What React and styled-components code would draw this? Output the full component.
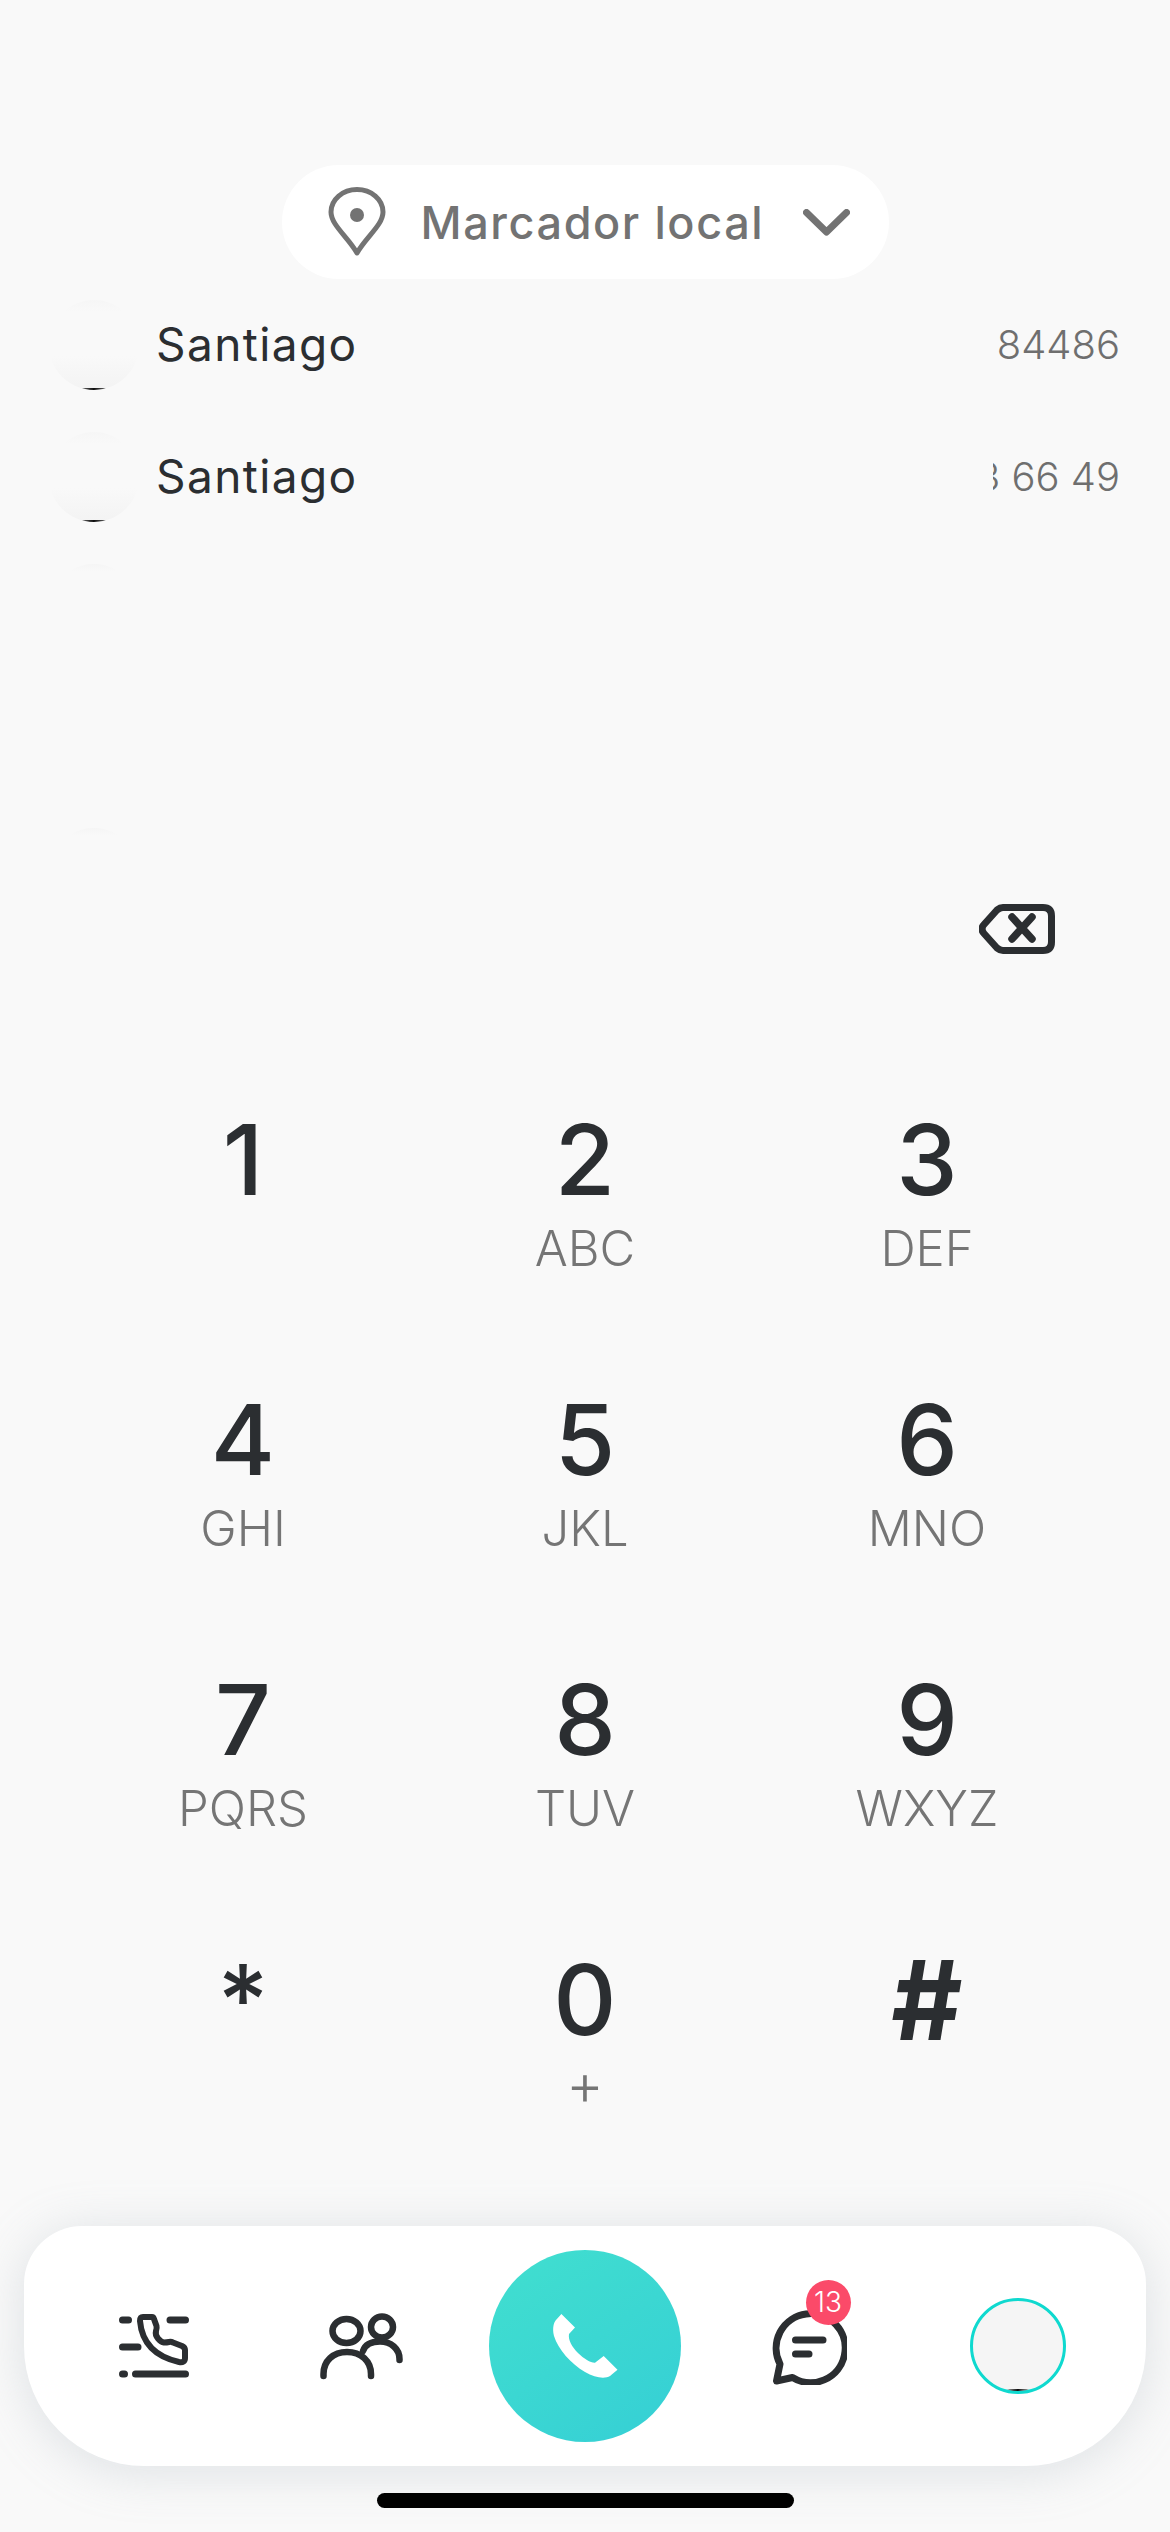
import React from 'react'
import styled, { createGlobalStyle } from 'styled-components'

const GlobalStyle = createGlobalStyle`
  html, body {
    margin: 0;
    padding: 0;
    background: #f9f9f9;
  }
  * {
    box-sizing: border-box;
  }
`

const Page = styled.div`
  width: 1170px;
  height: 2532px;
  display: flex;
  flex-direction: column;
  padding-top: 165px;
  overflow: hidden;
  background: #f9f9f9;
  font-family: Inter, 'Noto Sans', sans-serif;
`

const ScopePill = styled.div`
  width: 607px;
  height: 114px;
  align-self: center;
  flex: none;
  display: flex;
  align-items: center;
  padding: 0 39px 0 46px;
  gap: 35px;
  background: #fff;
  border-radius: 57px;
`

const ScopeLabel = styled.span`
  flex: 1;
  font-size: 45px;
  font-weight: 500;
  letter-spacing: 1.6px;
  color: #737373;
  white-space: nowrap;
`

const ContactList = styled.div`
  height: 581px;
  flex: none;
  overflow: hidden;
`

const ContactRow = styled.div`
  height: 132px;
  display: flex;
  align-items: center;
  padding: 0 50px 0 49px;
`

const Avatar = styled.div`
  position: relative;
  width: 90px;
  height: 90px;
  flex: none;
  border-radius: 50%;
  background: ${p => (p.$faint
    ? 'linear-gradient(180deg, #f5f5f5 0, #f9f9f9 7px)'
    : 'linear-gradient(180deg, #f6f6f6 0, #f9f9f9 12px, #f9f9f9 62%, #f3f3f3 100%)')};
  overflow: hidden;
  ${p => !p.$faint && `
    &::after {
      content: '';
      position: absolute;
      left: 33px;
      bottom: 0;
      width: 24px;
      height: 2px;
      border-radius: 50%;
      background: #111;
    }
  `}
`

const ContactName = styled.span`
  flex: 1;
  margin: -2px 0 0 17px;
  font-size: 46px;
  letter-spacing: 1.4px;
  color: #2b2e31;
`

const ContactNumber = styled.span`
  width: 127px;
  flex: none;
  margin-top: -2px;
  display: flex;
  justify-content: flex-end;
  overflow: hidden;
  white-space: nowrap;
  font-size: 40px;
  font-weight: 300;
  color: #6f6f6f;
`

const DeleteRow = styled.div`
  height: 241px;
  flex: none;
  display: flex;
  justify-content: flex-end;
  padding: 44px 115px 0 0;
`

const Keypad = styled.div`
  flex: none;
  display: grid;
  grid-template-columns: repeat(3, 342px);
  grid-auto-rows: 280px;
  justify-content: center;
`

const Key = styled.button`
  border: 0;
  padding: 9px 0 0;
  background: none;
  font-family: inherit;
  display: flex;
  flex-direction: column;
  align-items: center;
`

const Digit = styled.span`
  height: 100px;
  font-size: ${p => (p.$wide ? 110 : 98)}px;
  line-height: 100px;
  font-weight: ${p => (p.$wide ? 700 : 500)};
  color: #2b2e31;
`

const Letters = styled.span`
  margin-top: 9px;
  height: ${p => (p.$plus ? 50 : 60)}px;
  font-size: ${p => (p.$plus ? 58 : 49)}px;
  line-height: ${p => (p.$plus ? 50 : 60)}px;
  font-weight: 300;
  color: #757575;
`

const TabBar = styled.nav`
  width: 1122px;
  height: 240px;
  flex: none;
  margin: 5px 0 0 24px;
  padding: 0 22px 0 26px;
  display: grid;
  grid-template-columns: 208px 207px 240px 207px 212px;
  align-items: center;
  justify-items: center;
  background: #fff;
  border-radius: 58px 58px 120px 120px;
  box-shadow: 0 6px 50px rgba(150, 165, 175, 0.28);
`

const CallButton = styled.button`
  width: 192px;
  height: 192px;
  border: 0;
  padding: 0;
  border-radius: 50%;
  display: flex;
  align-items: center;
  justify-content: center;
  background: linear-gradient(145deg, #41dfcf 0%, #35cfd5 100%);
`

const ChatTab = styled.div`
  position: relative;
  display: flex;
`

const Badge = styled.span`
  position: absolute;
  top: -28px;
  right: -4px;
  width: 45px;
  height: 45px;
  border-radius: 50%;
  display: flex;
  align-items: center;
  justify-content: center;
  background: #fb4a69;
  color: #fff;
  font-size: 28px;
  font-weight: 300;
`

const ProfileRing = styled.div`
  position: relative;
  width: 96px;
  height: 96px;
  border: 3px solid #0fd9cf;
  border-radius: 50%;
  overflow: hidden;
  background: #f5f5f5;
  &::after {
    content: '';
    position: absolute;
    left: 33px;
    bottom: -1px;
    width: 24px;
    height: 3px;
    border-radius: 50%;
    background: #111;
  }
`

const HomeIndicator = styled.div`
  width: 417px;
  height: 15px;
  flex: none;
  align-self: center;
  margin-top: 27px;
  border-radius: 8px;
  background: #000;
`

const PinIcon = () => (
  <svg width="58" height="70" viewBox="0 0 58 70" fill="none" style={{ flex: 'none' }}>
    <path d="M29 66C20 50 3 38 3 25A26 22.5 0 0 1 55 25C55 38 38 50 29 66Z" stroke="#737373" strokeWidth="5" strokeLinejoin="round" />
    <circle cx="29" cy="28" r="7" fill="#737373" />
  </svg>
)

const ChevronIcon = () => (
  <svg width="47" height="27" viewBox="0 0 47 27" fill="none" style={{ flex: 'none' }}>
    <path d="M3.5 3.5L23.5 23L43.5 3.5" stroke="#737373" strokeWidth="7" strokeLinecap="round" strokeLinejoin="round" />
  </svg>
)

const BackspaceIcon = () => (
  <svg width="76" height="50" viewBox="0 0 76 50" fill="none">
    <path d="M24 3.5H64Q72.5 3.5 72.5 12V38Q72.5 46.5 64 46.5H24Q21 46.5 18 44L5 29.5Q1 25 5 20.5L18 6Q21 3.5 24 3.5Z" stroke="#2b2e31" strokeWidth="7" strokeLinejoin="round" />
    <path d="M33 13L53 35M53 13L33 35" stroke="#2b2e31" strokeWidth="7.5" strokeLinecap="round" />
  </svg>
)

const CallLogIcon = () => (
  <svg width="70" height="64" viewBox="0 0 70 64" fill="none" stroke="#2b2e31" strokeLinecap="round" strokeLinejoin="round">
    <path d="M3.5 6H9.5M51 6H66.5M3.5 33H19M3.5 60H5.5M16.5 60H66.5" strokeWidth="7" />
    <path d="M24 3H33Q34.5 3 35 5L37.5 12Q38 14 37 17Q36 21 39 24.5Q42 28 45 28.5Q48 28.5 50 28Q52 27.5 54 28.5L63 32Q66 33.5 66 36V44Q66 49 60 48C38 43 23 30 21 7Q21 3 24 3Z" strokeWidth="6" />
  </svg>
)

const PeopleIcon = () => (
  <svg width="83" height="67" viewBox="0 0 83 67" fill="none" stroke="#2b2e31" strokeWidth="6.5" strokeLinecap="round">
    <ellipse cx="26.5" cy="18" rx="14" ry="12" />
    <path d="M3.5 63V61C3.5 48 13 39 27 39C41 39 51 48 51 61V63" />
    <ellipse cx="62" cy="14" rx="11" ry="10.5" />
    <path d="M43 38C45 32 51 28.5 60 28.5C71 28.5 79.5 36 79.5 46V47" />
  </svg>
)

const ChatIcon = () => (
  <svg width="76" height="77" viewBox="0 0 76 77" fill="none" stroke="#2b2e31" strokeWidth="7" strokeLinecap="round" strokeLinejoin="round">
    <path d="M9 56A34.5 34.5 0 1 1 21.5 69.5L5.5 73Z" />
    <path d="M24.5 32H52M24.5 46H38" />
  </svg>
)

const HandsetIcon = () => (
  <svg width="65" height="65" viewBox="0 0 65 65" fill="#fff" style={{ overflow: 'visible' }}>
    <path d="M8.4 0L22 13.5L16 20C15 26 19 33 25 39C31 45 38 49 42 48.7L50.7 42L64.5 55.7L57 62C52 65 42 64 32 58C18 50 5 35 1 22C-1 14 1 8 3 6Z" />
  </svg>
)

const keys = [
  ['1', ''], ['2', 'ABC'], ['3', 'DEF'],
  ['4', 'GHI'], ['5', 'JKL'], ['6', 'MNO'],
  ['7', 'PQRS'], ['8', 'TUV'], ['9', 'WXYZ'],
  ['*', ''], ['0', '+'], ['#', ''],
]

const App = () => (
  <Page>
    <GlobalStyle />
    <ScopePill>
      <PinIcon />
      <ScopeLabel>Marcador local</ScopeLabel>
      <ChevronIcon />
    </ScopePill>
    <ContactList>
      <ContactRow>
        <Avatar />
        <ContactName>Santiago</ContactName>
        <ContactNumber>84486</ContactNumber>
      </ContactRow>
      <ContactRow>
        <Avatar />
        <ContactName>Santiago</ContactName>
        <ContactNumber>+56 9 8483 66 49</ContactNumber>
      </ContactRow>
      <ContactRow>
        <Avatar $faint />
      </ContactRow>
      <ContactRow />
      <ContactRow>
        <Avatar $faint />
      </ContactRow>
    </ContactList>
    <DeleteRow>
      <BackspaceIcon />
    </DeleteRow>
    <Keypad>
      {keys.map(([digit, letters]) => (
        <Key key={digit}>
          <Digit $wide={digit === '#'}>{digit}</Digit>
          <Letters $plus={letters === '+'}>{letters}</Letters>
        </Key>
      ))}
    </Keypad>
    <TabBar>
      <CallLogIcon />
      <PeopleIcon />
      <CallButton>
        <HandsetIcon />
      </CallButton>
      <ChatTab>
        <ChatIcon />
        <Badge>13</Badge>
      </ChatTab>
      <ProfileRing />
    </TabBar>
    <HomeIndicator />
  </Page>
)

export default App
